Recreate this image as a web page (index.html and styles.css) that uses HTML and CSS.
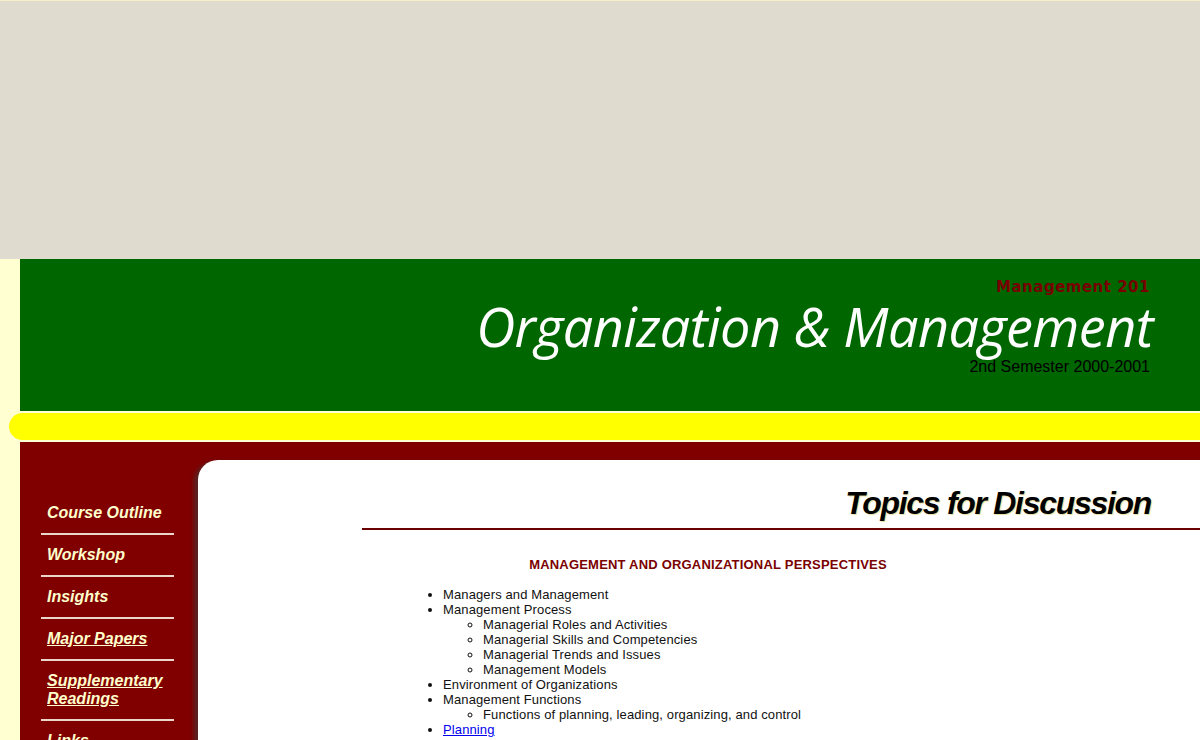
FILE: index.html
```html
<!DOCTYPE html>
<html>
<head>
<meta charset="utf-8">
<title>Organization &amp; Management</title>
<link rel="stylesheet" href="styles.css">
</head>
<body>
<div class="topbox"></div>
<div class="page">
  <header class="banner">
    <div class="course">Management 201</div>
    <h1 class="title">Organization &amp; Management</h1>
    <div class="term">2nd Semester 2000-2001</div>
  </header>
  <div class="stripe"></div>
  <div class="main">
    <nav class="side">
      <ul class="menu">
        <li><span class="item">Course Outline</span></li>
        <li><span class="item">Workshop</span></li>
        <li><span class="item">Insights</span></li>
        <li><a class="item" href="#">Major Papers</a></li>
        <li><a class="item" href="#">Supplementary Readings</a></li>
        <li><a class="item" href="#">Links</a></li>
      </ul>
    </nav>
    <section class="panel">
      <h2 class="heading">Topics for Discussion</h2>
      <div class="rule"></div>
      <h3 class="section">MANAGEMENT AND ORGANIZATIONAL PERSPECTIVES</h3>
      <ul class="topics">
        <li>Managers and Management</li>
        <li>Management Process
          <ul>
            <li>Managerial Roles and Activities</li>
            <li>Managerial Skills and Competencies</li>
            <li>Managerial Trends and Issues</li>
            <li>Management Models</li>
          </ul>
        </li>
        <li>Environment of Organizations</li>
        <li>Management Functions
          <ul>
            <li>Functions of planning, leading, organizing, and control</li>
          </ul>
        </li>
        <li><a href="#">Planning</a>
          <ul>
            <li>Organizational Planning</li>
            <li>Strategic Planning</li>
          </ul>
        </li>
      </ul>
    </section>
  </div>
</div>
</body>
</html>
```

FILE: styles.css
```css
html, body {
  margin: 0;
  padding: 0;
}
body {
  background: #ffffd2;
  font-family: "Liberation Sans", Arial, sans-serif;
  overflow: hidden;
}
.topbox {
  height: 258px;
  background: #e0dbcf;
  border-top: 1px solid #f7efc6;
}
.page {
  padding-left: 20px;
  background: #ffffd2;
}
.banner {
  background: #006600;
  height: 152px;
  box-sizing: border-box;
  padding: 19px 50px 0 0;
  text-align: right;
}
.course {
  font-family: "DejaVu Sans", Verdana, sans-serif;
  font-weight: bold;
  font-size: 15px;
  line-height: 18px;
  color: #780000;
  letter-spacing: 0.5px;
}
.title {
  margin: 0 -3px 0 0;
  font-family: "Open Sans", "Noto Sans", sans-serif;
  font-style: italic;
  font-weight: 400;
  font-size: 54px;
  line-height: 60px;
  color: #ffffff;
  letter-spacing: -0.55px;
}
.term {
  font-size: 16px;
  line-height: 18px;
  color: #000000;
  margin-top: 2px;
}
.stripe {
  height: 27px;
  margin: 2px 0 2px -11px;
  background: #ffff00;
  border-radius: 14px 0 0 14px;
}
.main {
  background: #800000;
  display: flex;
  padding-top: 18px;
  height: 300px;
}
.side {
  width: 178px;
  flex: none;
}
.menu {
  list-style: none;
  margin: 33px 0 0 21px;
  padding: 0;
  width: 133px;
}
.menu li {
  border-bottom: 2px solid #ecd6cc;
  padding: 11px 0 11px 6px;
  line-height: 18px;
}
.item {
  font-weight: bold;
  font-style: italic;
  font-size: 16px;
  color: #ffffcc;
  text-decoration: none;
  display: block;
}
a.item {
  text-decoration: underline;
}
.panel {
  flex: 1;
  background: #ffffff;
  border-top-left-radius: 20px;
  box-shadow: -4px 2px 4px rgba(60, 60, 60, 0.6);
  padding: 0 0 0 18px;
}
.heading {
  margin: 0;
  padding: 24px 49px 0 0;
  text-align: right;
  font-style: italic;
  font-weight: bold;
  font-size: 32px;
  line-height: 38px;
  letter-spacing: -1.3px;
  color: #000;
  text-shadow: 1px 1px 1px #e8e0a0;
}
.rule {
  margin: 6px 0 0 146px;
  height: 2px;
  background: #6a0000;
}
.section {
  margin: 27px 0 0 0;
  text-align: center;
  font-size: 13px;
  line-height: 15px;
  font-weight: bold;
  color: #7a0000;
  letter-spacing: 0.2px;
}
.topics {
  margin: 15px 0 0 187px;
  padding-left: 40px;
  font-size: 13px;
  line-height: 15px;
  color: #111;
  letter-spacing: 0.12px;
}
.topics ul {
  margin: 0;
  padding-left: 40px;
  list-style: circle;
}
.topics a {
  color: #0000ee;
}
```
